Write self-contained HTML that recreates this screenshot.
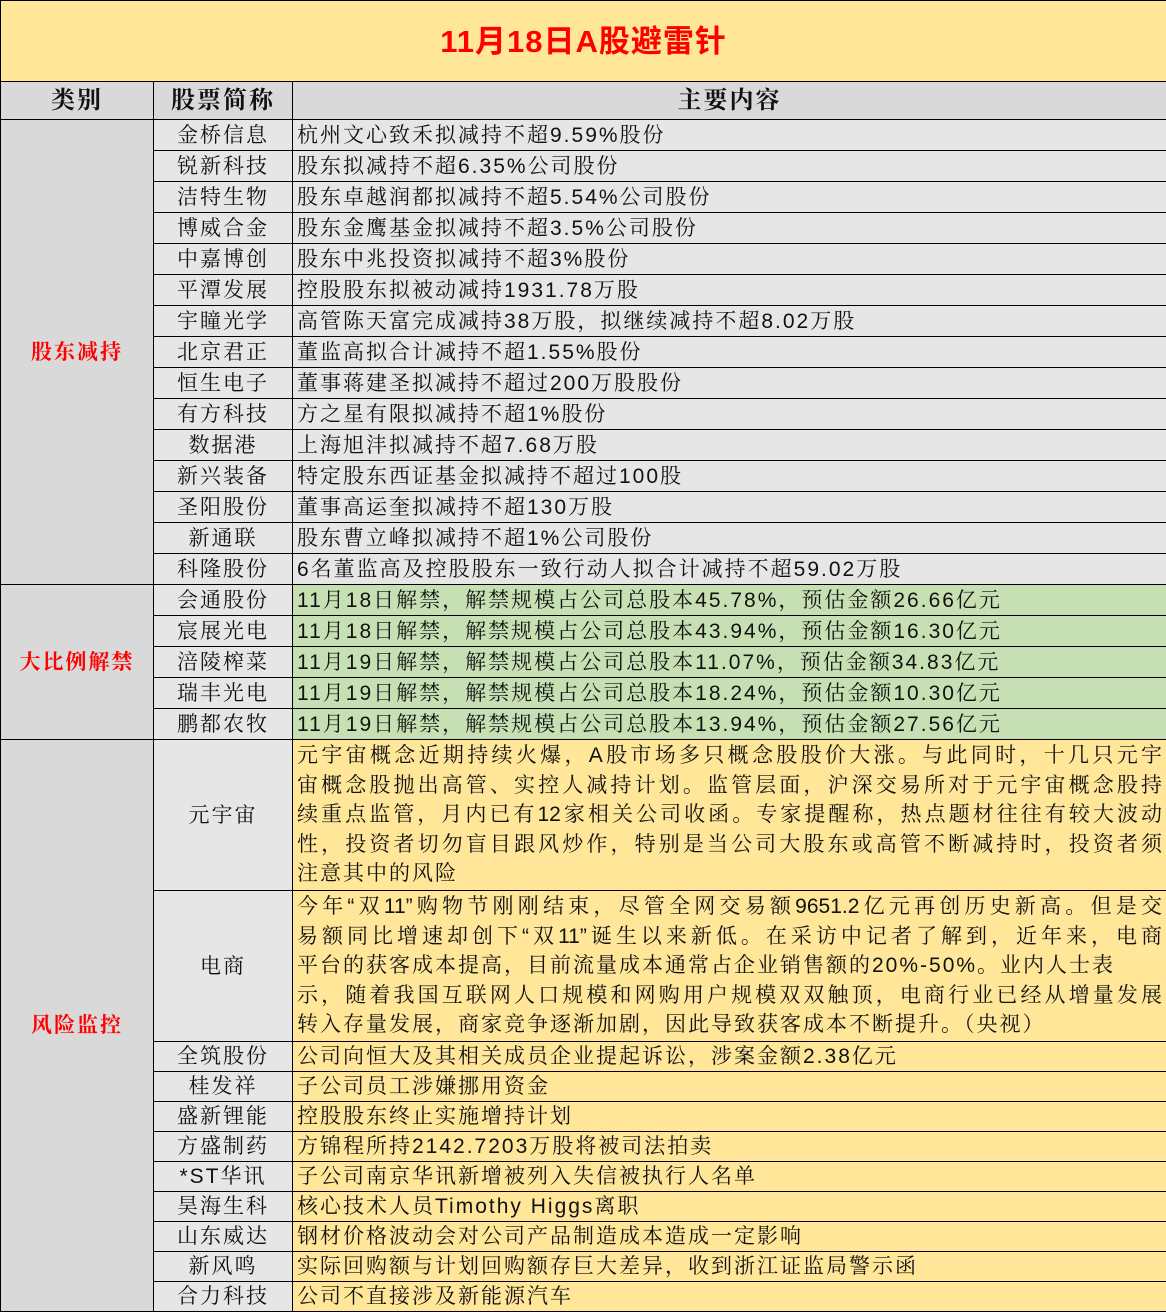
<!DOCTYPE html>
<html><head><meta charset="utf-8"><style>
body{margin:0;width:1166px;height:1310px;overflow:hidden;background:#fff;font-family:"Liberation Sans","Noto Serif CJK SC","Noto Sans CJK SC",serif;}
table{border-collapse:collapse;table-layout:fixed;width:1166px;position:absolute;left:0;top:0}
td{border:1.5px solid #000;padding:0;font-size:21px;letter-spacing:2px;color:#111;white-space:nowrap;overflow:hidden;line-height:29px}
.t{height:80px;background:#FFE699;color:#f00;font-weight:bold;font-size:31px;text-align:center;letter-spacing:1px;font-family:"Liberation Sans","Noto Sans CJK SC",sans-serif}
.h td{height:37px;background:#D9D9D9;font-weight:bold;font-size:24px;text-align:center}
.c{background:#D9D9D9;color:#f00;font-weight:bold;text-align:center}
.n{background:#E7E6E6;text-align:center}
.g{background:#E7E6E6;padding-left:4px}
.gr{background:#C6E0B4;padding-left:4px}
.y{background:#FFE699;padding-left:4px}
.s td{height:30px}
.r td{height:28.2px}
.p{padding:0 4px;line-height:29.6px}
.p div{text-align:justify;text-align-last:justify;letter-spacing:0}
.p div.l{text-align-last:left;letter-spacing:2px}
</style></head><body>
<table>
<colgroup><col style="width:153px"><col style="width:139px"><col style="width:874px"></colgroup>
<tr><td colspan="3" class="t">11月18日A股避雷针</td></tr>
<tr class="h"><td>类别</td><td>股票简称</td><td>主要内容</td></tr>
<tr class="s"><td class="c" rowspan="15">股东减持</td><td class="n">金桥信息</td><td class="g">杭州文心致禾拟减持不超9.59%股份</td></tr>
<tr class="s"><td class="n">锐新科技</td><td class="g">股东拟减持不超6.35%公司股份</td></tr>
<tr class="s"><td class="n">洁特生物</td><td class="g">股东卓越润都拟减持不超5.54%公司股份</td></tr>
<tr class="s"><td class="n">博威合金</td><td class="g">股东金鹰基金拟减持不超3.5%公司股份</td></tr>
<tr class="s"><td class="n">中嘉博创</td><td class="g">股东中兆投资拟减持不超3%股份</td></tr>
<tr class="s"><td class="n">平潭发展</td><td class="g">控股股东拟被动减持1931.78万股</td></tr>
<tr class="s"><td class="n">宇瞳光学</td><td class="g">高管陈天富完成减持38万股，拟继续减持不超8.02万股</td></tr>
<tr class="s"><td class="n">北京君正</td><td class="g">董监高拟合计减持不超1.55%股份</td></tr>
<tr class="s"><td class="n">恒生电子</td><td class="g">董事蒋建圣拟减持不超过200万股股份</td></tr>
<tr class="s"><td class="n">有方科技</td><td class="g">方之星有限拟减持不超1%股份</td></tr>
<tr class="s"><td class="n">数据港</td><td class="g">上海旭沣拟减持不超7.68万股</td></tr>
<tr class="s"><td class="n">新兴装备</td><td class="g">特定股东西证基金拟减持不超过100股</td></tr>
<tr class="s"><td class="n">圣阳股份</td><td class="g">董事高运奎拟减持不超130万股</td></tr>
<tr class="s"><td class="n">新通联</td><td class="g">股东曹立峰拟减持不超1%公司股份</td></tr>
<tr class="s"><td class="n">科隆股份</td><td class="g">6名董监高及控股股东一致行动人拟合计减持不超59.02万股</td></tr>
<tr class="s"><td class="c" rowspan="5">大比例解禁</td><td class="n">会通股份</td><td class="gr">11月18日解禁，解禁规模占公司总股本45.78%，预估金额26.66亿元</td></tr>
<tr class="s"><td class="n">宸展光电</td><td class="gr">11月18日解禁，解禁规模占公司总股本43.94%，预估金额16.30亿元</td></tr>
<tr class="s"><td class="n">涪陵榨菜</td><td class="gr">11月19日解禁，解禁规模占公司总股本11.07%，预估金额34.83亿元</td></tr>
<tr class="s"><td class="n">瑞丰光电</td><td class="gr">11月19日解禁，解禁规模占公司总股本18.24%，预估金额10.30亿元</td></tr>
<tr class="s"><td class="n">鹏都农牧</td><td class="gr">11月19日解禁，解禁规模占公司总股本13.94%，预估金额27.56亿元</td></tr>
<tr><td class="c" rowspan="11">风险监控</td><td class="n" style="height:150px">元宇宙</td><td class="y p">
<div>元宇宙概念近期持续火爆，A股市场多只概念股股价大涨。与此同时，十几只元宇</div>
<div>宙概念股抛出高管、实控人减持计划。监管层面，沪深交易所对于元宇宙概念股持</div>
<div>续重点监管，月内已有12家相关公司收函。专家提醒称，热点题材往往有较大波动</div>
<div>性，投资者切勿盲目跟风炒作，特别是当公司大股东或高管不断减持时，投资者须</div>
<div class="l">注意其中的风险</div></td></tr>
<tr><td class="n" style="height:150px">电商</td><td class="y p">
<div>今年“双11”购物节刚刚结束，尽管全网交易额9651.2亿元再创历史新高。但是交</div>
<div>易额同比增速却创下“双11”诞生以来新低。在采访中记者了解到，近年来，电商</div>
<div class="l">平台的获客成本提高，目前流量成本通常占企业销售额的20%-50%。业内人士表</div>
<div>示，随着我国互联网人口规模和网购用户规模双双触顶，电商行业已经从增量发展</div>
<div class="l">转入存量发展，商家竞争逐渐加剧，因此导致获客成本不断提升。（央视）</div></td></tr>
<tr class="r"><td class="n">全筑股份</td><td class="y">公司向恒大及其相关成员企业提起诉讼，涉案金额2.38亿元</td></tr>
<tr class="r"><td class="n">桂发祥</td><td class="y">子公司员工涉嫌挪用资金</td></tr>
<tr class="r"><td class="n">盛新锂能</td><td class="y">控股股东终止实施增持计划</td></tr>
<tr class="r"><td class="n">方盛制药</td><td class="y">方锦程所持2142.7203万股将被司法拍卖</td></tr>
<tr class="r"><td class="n">*ST华讯</td><td class="y">子公司南京华讯新增被列入失信被执行人名单</td></tr>
<tr class="r"><td class="n">昊海生科</td><td class="y">核心技术人员Timothy Higgs离职</td></tr>
<tr class="r"><td class="n">山东威达</td><td class="y">钢材价格波动会对公司产品制造成本造成一定影响</td></tr>
<tr class="r"><td class="n">新风鸣</td><td class="y">实际回购额与计划回购额存巨大差异，收到浙江证监局警示函</td></tr>
<tr class="r"><td class="n">合力科技</td><td class="y">公司不直接涉及新能源汽车</td></tr>
</table>
</body></html>
